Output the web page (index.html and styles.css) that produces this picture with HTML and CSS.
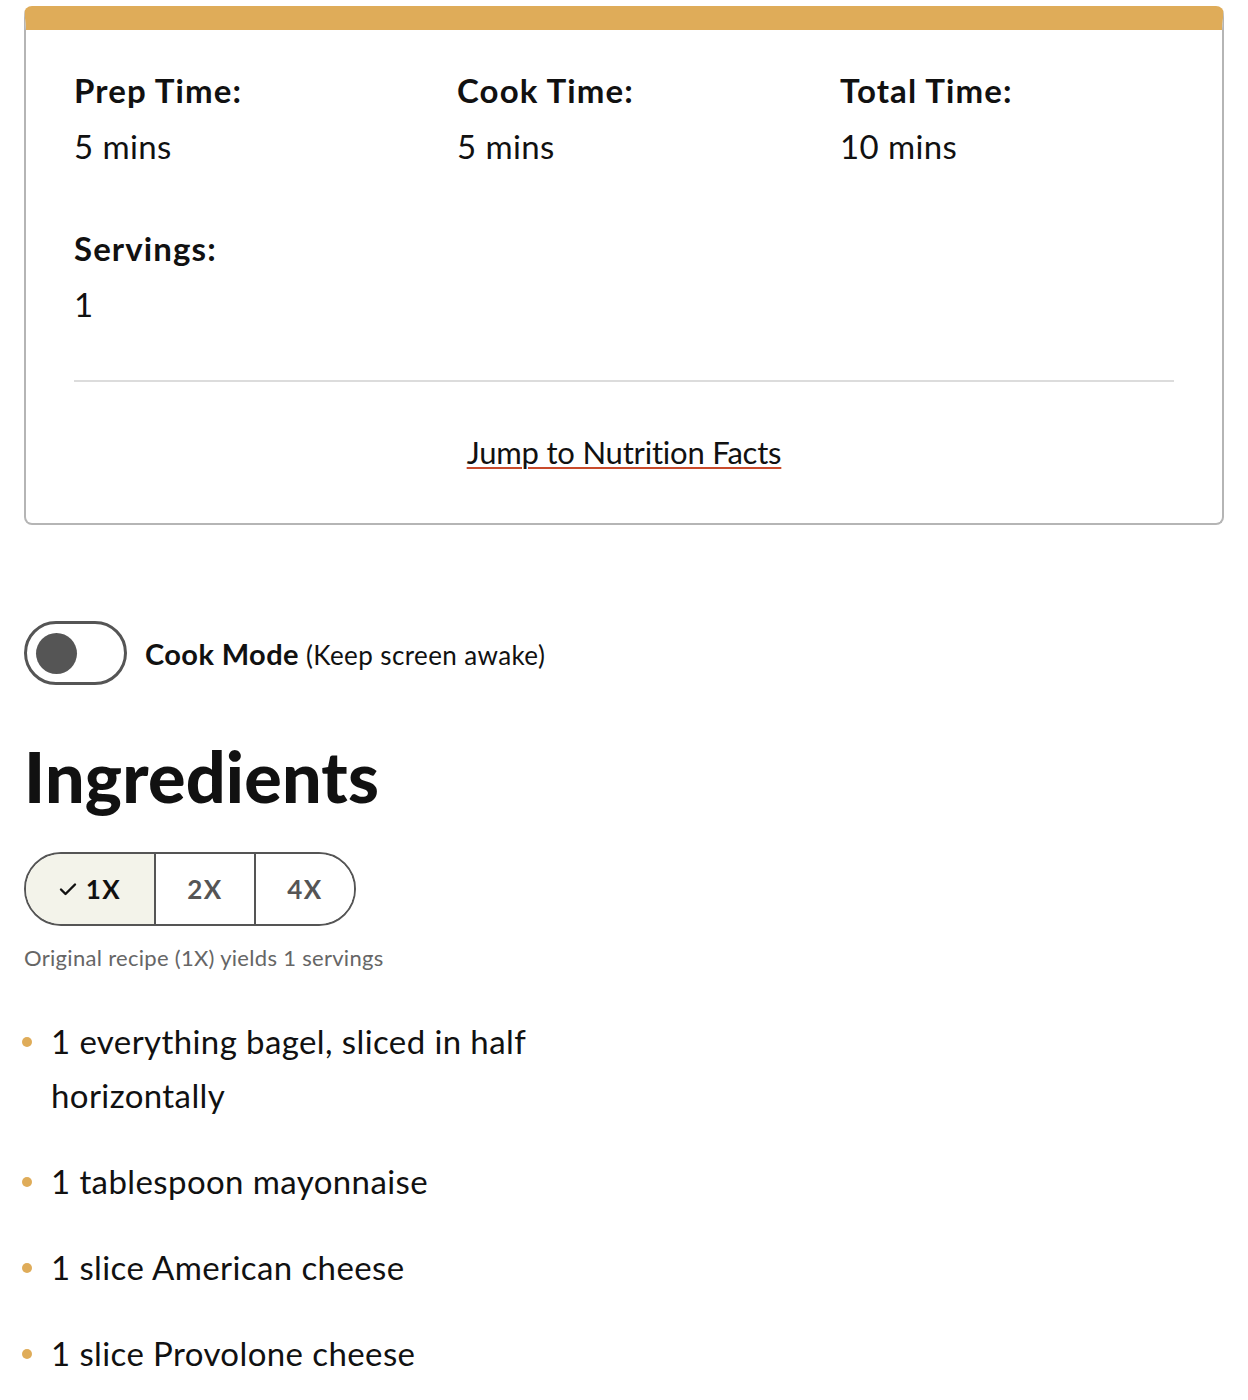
FILE: index.html
```html
<!DOCTYPE html>
<html lang="en">
<head>
<meta charset="utf-8">
<title>Recipe</title>
<link rel="stylesheet" href="styles.css">
</head>
<body>
<div class="page">
  <section class="card">
    <div class="meta">
      <div class="meta-item">
        <div class="meta-label">Prep Time:</div>
        <div class="meta-value">5 mins</div>
      </div>
      <div class="meta-item">
        <div class="meta-label">Cook Time:</div>
        <div class="meta-value">5 mins</div>
      </div>
      <div class="meta-item">
        <div class="meta-label">Total Time:</div>
        <div class="meta-value">10 mins</div>
      </div>
      <div class="meta-item">
        <div class="meta-label">Servings:</div>
        <div class="meta-value">1</div>
      </div>
    </div>
    <div class="divider"></div>
    <div class="jump"><a href="#nutrition">Jump to Nutrition Facts</a></div>
  </section>

  <div class="cook-mode">
    <span class="toggle"><span class="knob"></span></span>
    <span class="cook-text"><b>Cook Mode</b> (Keep screen awake)</span>
  </div>

  <h2 class="ing-title">Ingredients</h2>

  <div class="scale">
    <button class="scale-btn active"><svg class="check" viewBox="0 0 18 14" width="18" height="14"><path d="M2 7.5 L6.5 12 L16 2.5" fill="none" stroke="#111" stroke-width="2.4" stroke-linecap="round" stroke-linejoin="round"/></svg>1X</button>
    <button class="scale-btn">2X</button>
    <button class="scale-btn">4X</button>
  </div>
  <p class="yield">Original recipe (1X) yields 1 servings</p>

  <ul class="ing-list">
    <li>1 everything bagel, sliced in half horizontally</li>
    <li>1 tablespoon mayonnaise</li>
    <li>1 slice American cheese</li>
    <li>1 slice Provolone cheese</li>
  </ul>
</div>
</body>
</html>
```

FILE: styles.css
```css
* { box-sizing: border-box; }
html, body { margin: 0; padding: 0; background: #fff; }
body {
  font-family: "Lato", "Noto Sans", sans-serif;
  color: #111;
}
.page {
  padding: 6px 24px 0 24px;
}
.card {
  width: 1200px;
  border: 2px solid #b5b5b5;
  border-top: 24px solid #dfac59;
  border-radius: 8px;
  padding: 32px 48px 43px 48px;
}
.meta {
  display: grid;
  grid-template-columns: 383px 383px 1fr;
  row-gap: 46px;
}
.meta-label {
  font-size: 33px;
  font-weight: 700;
  line-height: 56px;
  letter-spacing: 1.1px;
}
.meta-value {
  font-size: 33px;
  line-height: 56px;
  letter-spacing: 0.4px;
}
.divider {
  margin-top: 48px;
  height: 2px;
  background: #dcdcdc;
}
.jump {
  margin-top: 42px;
  text-align: center;
  font-size: 31px;
  line-height: 56px;
  letter-spacing: -0.2px;
}
.jump a {
  color: #111;
  text-decoration: underline;
  text-decoration-color: #c84a2b;
  text-decoration-thickness: 2px;
  text-underline-offset: 3px;
}
.cook-mode {
  margin-top: 96px;
  display: flex;
  align-items: center;
  gap: 18px;
}
.toggle {
  width: 103px;
  height: 64px;
  border: 3px solid #555;
  border-radius: 32px;
  display: flex;
  align-items: center;
  padding-left: 9px;
}
.knob {
  width: 41px;
  height: 41px;
  border-radius: 50%;
  background: #555;
}
.cook-text {
  font-size: 26px;
  letter-spacing: 0.4px;
}
.cook-text b {
  font-size: 29px;
  font-weight: 700;
  letter-spacing: 0.4px;
}
.ing-title {
  margin: 49px 0 0 0;
  font-size: 70px;
  font-weight: 900;
  line-height: 84px;
  letter-spacing: 0.2px;
}
.scale {
  margin-top: 34px;
  display: inline-flex;
  border: 2px solid #555;
  border-radius: 40px;
  overflow: hidden;
  height: 74px;
}
.scale-btn {
  font-family: inherit;
  font-size: 26px;
  font-weight: 700;
  letter-spacing: 1.5px;
  color: #555;
  background: #fff;
  border: 0;
  border-left: 2px solid #555;
  width: 100px;
  display: flex;
  align-items: center;
  justify-content: center;
  gap: 9px;
  padding: 0;
}
.scale-btn.active {
  border-left: 0;
  width: 128px;
  background: #f3f3ea;
  color: #111;
}
.check { display: block; }
.yield {
  margin: 16px 0 0 0;
  font-size: 22px;
  line-height: 32px;
  color: #666;
  letter-spacing: 0.3px;
}
.ing-list {
  list-style: none;
  margin: 40px 0 0 0;
  padding: 0;
  width: 540px;
}
.ing-list li {
  display: flex;
  align-items: flex-start;
  font-size: 33px;
  line-height: 54px;
  margin-bottom: 32px;
  letter-spacing: 0.4px;
}
.ing-list li::before {
  content: "";
  flex: none;
  width: 10px;
  height: 10px;
  border-radius: 50%;
  background: #dfac59;
  margin: 23px 19px 0 -2px;
}
```
